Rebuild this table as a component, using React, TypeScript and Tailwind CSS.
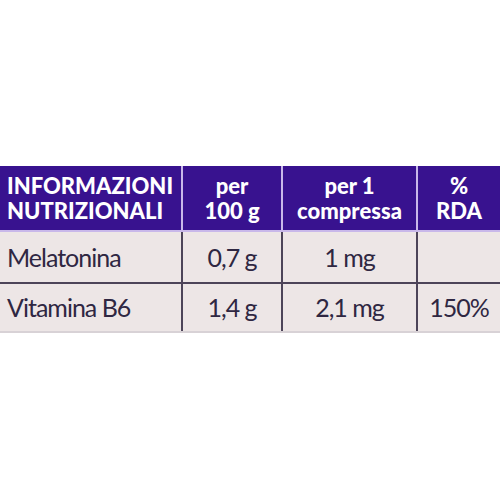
import React from "react";

const head = "text-white font-black text-[22px] leading-[25px] tracking-[0px]";
const body = "text-[#2f2742] text-[25px] leading-none tracking-[-1px]";

export default function App() {
  return (
    <div className="w-[500px] h-[500px] bg-white pt-[166px]" style={{ fontFamily: "Lato, 'Open Sans', sans-serif" }}>
      <div className="grid grid-cols-[181px_100px_135px_84px] bg-[#ede6e6] border-b-2 border-[#d8d2d6]">
        {/* header */}
        <div className={`bg-[#38128f] h-[66px] border-b-2 border-[#c9b8ea] flex flex-col justify-center pl-[7px] ${head}`}>
          <span>INFORMAZIONI</span>
          <span>NUTRIZIONALI</span>
        </div>
        <div className={`bg-[#38128f] h-[66px] border-b-2 border-l-2 border-[#c9b8ea] flex flex-col justify-center items-center ${head}`}>
          <span>per</span>
          <span>100 g</span>
        </div>
        <div className={`bg-[#38128f] h-[66px] border-b-2 border-l-2 border-[#c9b8ea] flex flex-col justify-center items-center ${head}`}>
          <span>per 1</span>
          <span>compressa</span>
        </div>
        <div className={`bg-[#38128f] h-[66px] border-b-2 border-l-2 border-[#c9b8ea] flex flex-col justify-center items-center ${head}`}>
          <span>%</span>
          <span>RDA</span>
        </div>

        {/* row 1 */}
        <div className={`h-[52px] flex items-center pl-[7px] border-b-2 border-[#4d4459] ${body}`}>Melatonina</div>
        <div className={`h-[52px] flex items-center justify-center border-b-2 border-l-2 border-[#4d4459] ${body}`}>0,7 g</div>
        <div className={`h-[52px] flex items-center justify-center border-b-2 border-l-2 border-[#4d4459] ${body}`}>1 mg</div>
        <div className={`h-[52px] flex items-center justify-center border-b-2 border-l-2 border-[#4d4459] ${body}`}></div>

        {/* row 2 */}
        <div className={`h-[47px] flex items-center pl-[7px] ${body}`}>Vitamina B6</div>
        <div className={`h-[47px] flex items-center justify-center border-l-2 border-[#4d4459] ${body}`}>1,4 g</div>
        <div className={`h-[47px] flex items-center justify-center border-l-2 border-[#4d4459] ${body}`}>2,1 mg</div>
        <div className={`h-[47px] flex items-center justify-center border-l-2 border-[#4d4459] ${body}`}>150%</div>
      </div>
    </div>
  );
}
